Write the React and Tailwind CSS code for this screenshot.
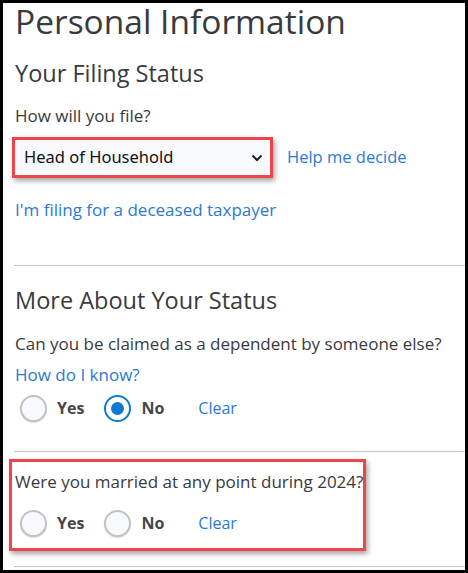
import React, { useState } from 'react';

const font = { fontFamily: '"Open Sans", "Noto Sans", sans-serif' };

const Radio = ({ checked, onClick }) => (
  <button
    type="button"
    onClick={onClick}
    className={`w-[27px] h-[27px] rounded-full flex items-center justify-center shrink-0 ${
      checked
        ? 'border-[2px] border-[#0a7bd0] bg-white'
        : 'border-[2px] border-[#c2c2c2] bg-[#f8f9fc] shadow-[0_1px_1px_rgba(0,0,0,0.15)]'
    }`}
  >
    {checked && <span className="w-[13px] h-[13px] rounded-full bg-[#0a7bd0]" />}
  </button>
);

const YesNo = ({ value, setValue }) => (
  <div className="flex items-center h-[28px] ml-[5px]">
    <Radio checked={value === 'yes'} onClick={() => setValue('yes')} />
    <span className="ml-[10px] text-[16px] font-bold text-[#46464a]">Yes</span>
    <span className="ml-[20px]">
      <Radio checked={value === 'no'} onClick={() => setValue('no')} />
    </span>
    <span className="ml-[10px] text-[16px] font-bold text-[#46464a]">No</span>
    <span
      className="ml-[34px] text-[16px] text-[#2a7ad5] cursor-pointer"
      onClick={() => setValue(null)}
    >
      Clear
    </span>
  </div>
);

export default function App() {
  const [dependent, setDependent] = useState('no');
  const [married, setMarried] = useState(null);

  return (
    <div className="w-[468px] h-[573px] bg-white border-[3px] border-black text-[#393a3d]" style={font}>
      <div className="pl-[12px]">
        <h1 className="text-[33.5px] leading-[36px] font-normal whitespace-nowrap">Personal Information</h1>
        <h2 className="mt-[19px] text-[23.5px] leading-[30px] font-normal">Your Filing Status</h2>
        <p className="mt-[16px] text-[17px] leading-[24px]">How will you file?</p>

        <div className="mt-[9px] flex items-center">
          <div className="w-[261px] h-[41px] border-[3px] border-[#f0444b] bg-[#f7f9fd] shadow-[2px_3px_5px_rgba(0,0,0,0.35)] -ml-[3px] flex items-center justify-between pl-[9px] pr-[7px]">
            <span className="text-[16.5px] text-[#111]" style={{ fontFamily: '"Noto Sans", sans-serif' }}>
              Head of Household
            </span>
            <svg width="12" height="8" viewBox="0 0 12 8" fill="none">
              <path d="M1.5 1.5 L6 6 L10.5 1.5" stroke="#222" strokeWidth="2" />
            </svg>
          </div>
          <a className="ml-[14px] text-[16.5px] text-[#2a7ad5] cursor-pointer">Help me decide</a>
        </div>

        <p className="mt-[20px] text-[17px] leading-[24px] text-[#2a7ad5]">I'm filing for a deceased taxpayer</p>

        <div className="mt-[43px] -ml-[1px] h-px bg-[#b7c9e2]" />

        <h2 className="mt-[20px] text-[23.5px] leading-[28px] font-normal">More About Your Status</h2>
        <p className="mt-[18px] text-[17px] leading-[24px] whitespace-nowrap">Can you be claimed as a dependent by someone else?</p>
        <p className="mt-[7px] text-[17px] leading-[24px] text-[#2a7ad5]">How do I know?</p>
        <div className="mt-[7px]">
          <YesNo value={dependent} setValue={setDependent} />
        </div>

        <div className="mt-[29px] -ml-[1px] h-px bg-[#b7c9e2]" />

        <div className="mt-[7px] -ml-[6px] w-[357px] h-[92px] border-[3px] border-[#f0444b] shadow-[2px_3px_5px_rgba(0,0,0,0.35)] pl-[3px] pt-[8px]">
          <p className="text-[17px] leading-[24px] whitespace-nowrap">Were you married at any point during 2024?</p>
          <div className="mt-[15px]">
            <YesNo value={married} setValue={setMarried} />
          </div>
        </div>

        <div className="mt-[15px] -ml-[1px] h-px bg-[#b7c9e2]" />
      </div>
    </div>
  );
}
